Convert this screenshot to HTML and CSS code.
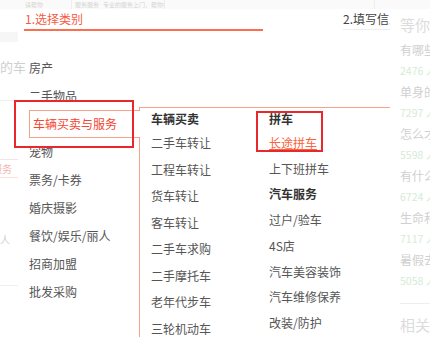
FILE: index.html
```html
<!DOCTYPE html>
<html lang="zh-CN">
<head>
    <meta charset="UTF-8">
    <meta name="viewport" content="width=device-width, initial-scale=1.0">
    <title>发布信息 - 选择类别</title>
    <link rel="stylesheet" href="styles.css">
</head>
<body>
    <!-- faded page header behind the dialog -->
    <div class="topbar">
        <span class="top-tip">请帮你</span>
        <span class="top-box">服务服务 &nbsp; 专业的服务上门，帮你搞定</span>
        <span class="top-sep"></span>
    </div>

    <div class="main">
        <!-- faded page content on the left -->
        <aside class="left-strip">
            <div class="ls-block"></div>
            <div class="ls-text">的车</div>
            <div class="ls-line short"></div>
            <div class="ls-tag">服务</div>
            <div class="ls-person">人</div>
            <div class="ls-line"></div>
        </aside>

        <!-- Publish dialog -->
        <section class="dialog">
            <div class="tabs">
                <div class="tab tab-active">1.选择类别</div>
                <div class="tab tab-next">2.填写信息</div>
            </div>

            <div class="dialog-body">
                <ul class="cats">
                    <li class="cat">房产</li>
                    <li class="cat">二手物品</li>
                    <li class="cat on">车辆买卖与服务</li>
                    <li class="cat">宠物</li>
                    <li class="cat">票务/卡券</li>
                    <li class="cat">婚庆摄影</li>
                    <li class="cat">餐饮/娱乐/丽人</li>
                    <li class="cat">招商加盟</li>
                    <li class="cat">批发采购</li>
                </ul>

                <div class="panel">
                    <div class="col col-a">
                        <h4>车辆买卖</h4>
                        <a>二手车转让</a>
                        <a>工程车转让</a>
                        <a>货车转让</a>
                        <a>客车转让</a>
                        <a>二手车求购</a>
                        <a>二手摩托车</a>
                        <a>老年代步车</a>
                        <a>三轮机动车</a>
                    </div>
                    <div class="col col-b">
                        <h4>拼车</h4>
                        <a class="hot">长途拼车</a>
                        <a>上下班拼车</a>
                        <a class="sub-title">汽车服务</a>
                        <a>过户/验车</a>
                        <a>4S店</a>
                        <a>汽车美容装饰</a>
                        <a>汽车维修保养</a>
                        <a>改装/防护</a>
                    </div>
                </div>
            </div>
        </section>

        <!-- faded sidebar on the right -->
        <aside class="right-strip">
            <div class="rs-title">等你来答</div>
            <div class="rs-item"><p>有哪些好玩的</p><span>2476 人看过</span></div>
            <div class="rs-item"><p>单身的人</p><span>7297 人看过</span></div>
            <div class="rs-item"><p>怎么才能</p><span>5598 人看过</span></div>
            <div class="rs-item"><p>有什么好</p><span>6724 人看过</span></div>
            <div class="rs-item"><p>生命和</p><span>7117 人看过</span></div>
            <div class="rs-item"><p>暑假去哪</p><span>5058 人看过</span></div>
            <div class="rs-sep"></div>
            <div class="rs-title related">相关搜索</div>
        </aside>
    </div>

    <!-- red annotation boxes drawn over the screenshot -->
    <div class="mark mark-cat"></div>
    <div class="mark mark-sub"></div>
</body>
</html>
```

FILE: styles.css
```css
body {
    margin: 0;
    width: 430px;
    height: 350px;
    overflow: hidden;
    position: relative;
    background: #fff;
    color: #555;
    font-family: "Noto Sans CJK SC", "Noto Sans", sans-serif;
    font-size: 12px;
}

/* faded header */
.topbar {
    height: 9px;
    background: #fafafa;
    display: flex;
    align-items: center;
    font-size: 6px;
    color: #d4d4d4;
    white-space: nowrap;
    overflow: hidden;
}
.top-tip {
    margin-left: 25px;
}
.top-box {
    margin-left: 28px;
    width: 94px;
    height: 9px;
    line-height: 9px;
    border-left: 1px solid #eee;
    border-right: 1px solid #eee;
    padding-left: 3px;
    box-sizing: border-box;
    overflow: hidden;
}
.top-sep {
    margin-left: 209px;
    width: 1px;
    height: 9px;
    background: #eee;
}

.main {
    display: flex;
}

/* left faded strip */
.left-strip {
    width: 24px;
    flex-shrink: 0;
    color: #cfcfcf;
}
.ls-block {
    margin-top: 23px;
    width: 18px;
    height: 10px;
    background: #f6f6f6;
}
.ls-text {
    margin-top: 17px;
    font-size: 13px;
    line-height: 16px;
    white-space: nowrap;
}
.ls-line {
    margin-top: 39px;
    width: 18px;
    height: 1px;
    background: #f0f0f0;
}
.ls-line.short {
    margin-top: 25px;
    width: 14px;
}
.ls-tag {
    margin-top: 58px;
    margin-left: -8px;
    width: 18px;
    height: 17px;
    line-height: 17px;
    padding-right: 8px;
    border-top: 1px solid #fde0e0;
    border-bottom: 1px solid #fde0e0;
    font-size: 10px;
    color: #f7b0b0;
    text-align: right;
    overflow: hidden;
    white-space: nowrap;
}
.ls-person {
    margin-top: 56px;
    line-height: 12px;
    font-size: 10px;
}

/* dialog */
.dialog {
    width: 366px;
    flex-shrink: 0;
    overflow: hidden;
}
.tabs {
    display: flex;
    height: 22px;
}
.tab {
    line-height: 20px;
    white-space: nowrap;
    overflow: hidden;
    box-sizing: border-box;
}
.tab-active {
    width: 239px;
    height: 22px;
    padding-left: 1px;
    color: #f55b3f;
    border-bottom: 2px solid #fb6f50;
}
.tab-next {
    margin-left: 80px;
    width: 47px;
    height: 21px;
    color: #444;
    border-bottom: 1px solid #eee;
}

.dialog-body {
    display: flex;
}
.cats {
    list-style: none;
    margin: 0;
    padding: 23px 0 0;
    width: 115px;
    flex-shrink: 0;
}
.cat {
    height: 28px;
    line-height: 28px;
    padding-left: 5px;
    white-space: nowrap;
}
.cat.on {
    position: relative;
    z-index: 1;
    height: 26px;
    line-height: 26px;
    margin-left: 5px;
    margin-right: -1px;
    padding-left: 3px;
    border: 1px solid #f7a08a;
    border-right: none;
    background: #fff;
    color: #f4452f;
}

.panel {
    margin-top: 76px;
    width: 251px;
    height: 230px;
    flex-shrink: 0;
    box-sizing: border-box;
    border-top: 1px solid #f7a08a;
    border-left: 1px solid #f7a08a;
    padding-left: 11px;
    display: flex;
}
.col {
    width: 118px;
    flex-shrink: 0;
    white-space: nowrap;
}
.col h4 {
    margin: 0;
    font-size: 12px;
    line-height: 22px;
    font-weight: bold;
    color: #333;
}
.col a {
    display: block;
    color: #555;
}
.col-a a {
    line-height: 26.5px;
}
.col-b a {
    line-height: 25.7px;
}
.col a.sub-title {
    font-weight: bold;
    color: #333;
}
.col a.hot {
    color: #f7643f;
    text-decoration: underline;
}

/* right faded strip */
.right-strip {
    width: 40px;
    flex-shrink: 0;
    padding-left: 10px;
    box-sizing: border-box;
    white-space: nowrap;
    overflow: hidden;
}
.rs-title {
    margin-top: 6px;
    font-size: 15px;
    line-height: 20px;
    color: #dcdcdc;
}
.rs-item {
    margin-top: 5px;
    line-height: 20px;
}
.rs-item + .rs-item {
    margin-top: 1px;
}
.rs-item p {
    margin: 0;
    color: #d0d0d0;
}
.rs-item span {
    font-size: 10.5px;
    color: #d4ecd5;
}
.rs-sep {
    margin-top: 12px;
    height: 1px;
    background: #eee;
}
.rs-title.related {
    margin-top: 11px;
}

/* annotation boxes */
.mark {
    position: absolute;
    border: 2px solid #e8282b;
    box-sizing: border-box;
    z-index: 2;
}
.mark-cat {
    left: 14px;
    top: 100px;
    width: 120px;
    height: 48px;
}
.mark-sub {
    left: 256px;
    top: 111px;
    width: 67px;
    height: 41px;
}
```
